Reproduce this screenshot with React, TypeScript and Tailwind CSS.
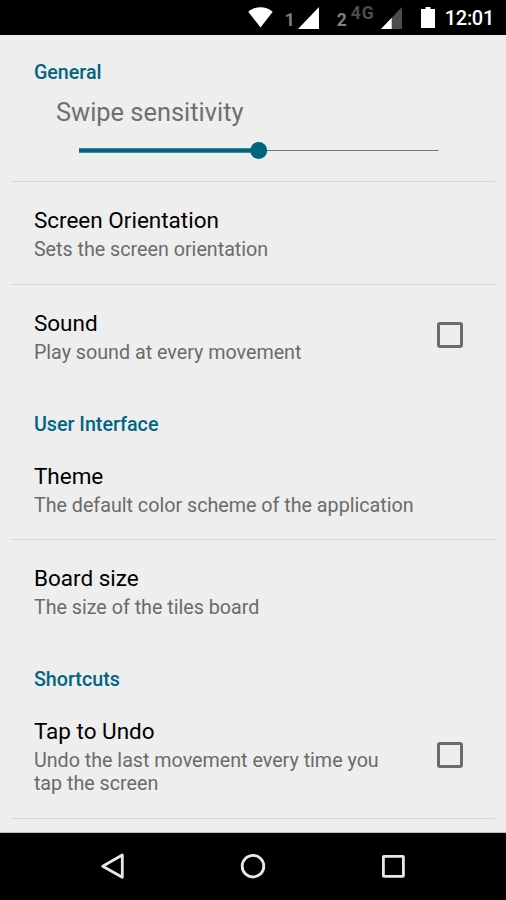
import React, { useState } from 'react';

const StatusBar = () => (
  <header className="flex h-[35px] shrink-0 items-center justify-end bg-black pr-[12px]">
    <svg className="mr-[12px]" width="25" height="21" viewBox="0 0 25 21" fill="#fff">
      <path d="M12.5 20.5 L0.3 4.7 C7.5 -1.2 17.5 -1.2 24.7 4.7 Z" />
    </svg>
    <span className="mt-[4px] mr-[3px] text-[17.5px] leading-[20px] font-bold text-[#808080]">1</span>
    <svg className="mr-[18px]" width="21" height="22" viewBox="0 0 21 22" fill="#fff">
      <path d="M21 0 V22 H0 Z" />
    </svg>
    <span className="mt-[4px] text-[17.5px] leading-[20px] font-bold text-[#808080]">2</span>
    <span className="mr-[6px] mb-[9px] ml-[4px] text-[17.5px] leading-[20px] font-bold tracking-[1px] text-[#4d4d4d]">4G</span>
    <svg className="mr-[19px]" width="21" height="22" viewBox="0 0 21 22">
      <path d="M21 0 V22 H0 Z" fill="#4d4d4d" />
      <path d="M10.7 10.8 V22 H0 Z" fill="#fff" />
    </svg>
    <svg className="mr-[10px]" width="14" height="21" viewBox="0 0 14 21" fill="#fff">
      <path d="M4.5 0 H9.5 V2 H14 V21 H0 V2 H4.5 Z" />
    </svg>
    <span className="text-[20px] leading-[24px] font-medium tracking-[-0.3px] text-white">12:01</span>
  </header>
);

const SectionTitle = ({ children }: { children: React.ReactNode }) => (
  <h2 className="px-[22.5px] pt-px text-[19.7px] leading-[23px] font-medium text-[#006581]">{children}</h2>
);

interface SettingProps {
  title: string;
  summary: string;
  checked?: boolean;
  onToggle?: () => void;
}

const Setting = ({ title, summary, checked, onToggle }: SettingProps) => (
  <div className="flex items-center px-[22.5px]" onClick={onToggle}>
    <div className={onToggle ? 'w-[380px] pr-[20px]' : 'w-[400px]'}>
      <h3 className="text-[22.5px] leading-[28px] text-black">{title}</h3>
      <p className="mt-[4px] text-[19.7px] leading-[23px] text-[#6b6b6b]">{summary}</p>
    </div>
    {onToggle && (
      <div className="mb-[3px] ml-[23px] h-[26px] w-[26px] rounded-[3px] border-[3px] border-[#6b6b6b]">
        {checked && <div className="m-[3px] h-[14px] w-[14px] bg-[#006581]" />}
      </div>
    )}
  </div>
);

const App = () => {
  const [sound, setSound] = useState(false);
  const [undo, setUndo] = useState(false);

  return (
    <div className="flex h-[900px] w-[506px] flex-col overflow-hidden bg-[#eeeeee] font-['Roboto',sans-serif]">
      <StatusBar />
      <main className="h-[798px] overflow-hidden border-b border-[#bdbdbd] px-[11.4px] pt-[25px]">
        <SectionTitle>General</SectionTitle>
        <div className="h-[98px] border-b border-[#d8d8d8] px-[44.6px] pt-[12px]">
          <h3 className="text-[25.4px] leading-[32px] text-[#6f6f6f]">Swipe sensitivity</h3>
          <svg className="ml-[23px] mt-[12px]" width="362" height="20" viewBox="0 0 362 20">
            <path d="M0 10.5 H359.5" stroke="#777" strokeWidth="1" />
            <path d="M0 10.5 H180" stroke="#006581" strokeWidth="4.6" />
            <circle cx="179.7" cy="10.5" r="8.5" fill="#006581" />
          </svg>
        </div>
        <div className="h-[103px] border-b border-[#d8d8d8] pt-[24px]">
          <Setting title="Screen Orientation" summary="Sets the screen orientation" />
        </div>
        <div className="h-[127px] pt-[24px]">
          <Setting title="Sound" summary="Play sound at every movement" checked={sound} onToggle={() => setSound(!sound)} />
        </div>
        <SectionTitle>User Interface</SectionTitle>
        <div className="h-[104px] border-b border-[#d8d8d8] pt-[26px]">
          <Setting title="Theme" summary="The default color scheme of the application" />
        </div>
        <div className="h-[127px] pt-[24px]">
          <Setting title="Board size" summary="The size of the tiles board" />
        </div>
        <SectionTitle>Shortcuts</SectionTitle>
        <div className="h-[128px] border-b border-[#d8d8d8] pt-[26px]">
          <Setting
            title="Tap to Undo"
            summary="Undo the last movement every time you tap the screen"
            checked={undo}
            onToggle={() => setUndo(!undo)}
          />
        </div>
      </main>
      <nav className="flex h-[67px] shrink-0 items-center bg-black pl-[99px]">
        <svg width="308" height="31" viewBox="0 0 308 31" fill="none" stroke="#e8e8e8" strokeWidth="2.8">
          <path d="M23.3 4 V26.3 L3.7 15.2 Z" strokeLinejoin="round" />
          <circle cx="154" cy="15.2" r="10.8" />
          <rect x="284.4" y="5.3" width="20" height="20" rx="0.5" />
        </svg>
      </nav>
    </div>
  );
};

export default App;
